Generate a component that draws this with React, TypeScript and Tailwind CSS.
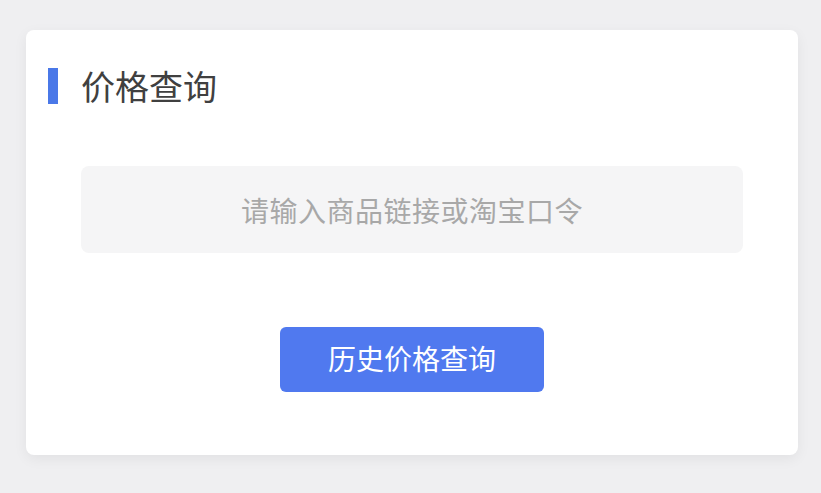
export default function App() {
  return (
    <div
      className="w-full h-[493px] bg-[#efeff1] pt-[30px] pl-[26px]"
      style={{ fontFamily: '"Noto Sans CJK SC", "Noto Sans", sans-serif' }}
    >
      <div className="w-[772px] h-[425px] bg-white rounded-[8px] shadow-[0_4px_14px_rgba(0,0,0,0.06)] flex flex-col">
        {/* Title */}
        <div className="flex items-center h-[36px] mt-[38px] ml-[22px]">
          <div className="w-[10px] h-[36px] bg-[#4a78e8]" />
          <span className="ml-[23px] text-[34px] leading-none text-[#404040]">价格查询</span>
        </div>

        {/* Input */}
        <div className="mt-[62px] mx-auto w-[662px] h-[87px] rounded-[8px] bg-[#f5f5f6] flex items-center justify-center">
          <span className="text-[28px] leading-none text-[#a8a8a8] tracking-[0.5px]">请输入商品链接或淘宝口令</span>
        </div>

        {/* Button */}
        <button className="mt-[74px] mx-auto w-[264px] h-[65px] pb-[4px] rounded-[6px] bg-[#5079ef] text-white text-[28px] leading-none flex items-center justify-center">
          历史价格查询
        </button>
      </div>
    </div>
  );
}
